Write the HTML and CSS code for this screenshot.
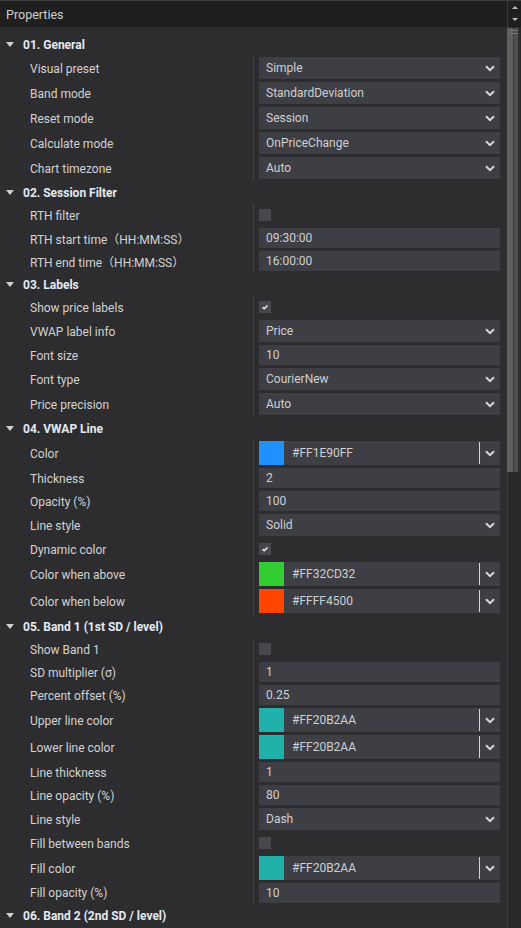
FILE: index.html
```html
<!DOCTYPE html>
<html>
<head>
<meta charset="utf-8">
<link rel="stylesheet" href="styles.css">
</head>
<body>
<div class="panel">
  <div class="titlebar">
    <span class="title">Properties</span>
    <div class="spin"><span class="up"></span><span class="down"></span></div>
  </div>
  <div class="body">
    <div class="list">

      <div class="sec-head"><span class="tri"></span>01. General</div>
      <div class="rows">
        <div class="row dd"><div class="label">Visual preset</div><div class="ctrl"><div class="select"><span>Simple</span><svg class="chev" width="10" height="7" viewBox="0 0 10 7"><path d="M1 1.2 L5 5.2 L9 1.2"/></svg></div></div></div>
        <div class="row dd"><div class="label">Band mode</div><div class="ctrl"><div class="select"><span>StandardDeviation</span><svg class="chev" width="10" height="7" viewBox="0 0 10 7"><path d="M1 1.2 L5 5.2 L9 1.2"/></svg></div></div></div>
        <div class="row dd"><div class="label">Reset mode</div><div class="ctrl"><div class="select"><span>Session</span><svg class="chev" width="10" height="7" viewBox="0 0 10 7"><path d="M1 1.2 L5 5.2 L9 1.2"/></svg></div></div></div>
        <div class="row dd"><div class="label">Calculate mode</div><div class="ctrl"><div class="select"><span>OnPriceChange</span><svg class="chev" width="10" height="7" viewBox="0 0 10 7"><path d="M1 1.2 L5 5.2 L9 1.2"/></svg></div></div></div>
        <div class="row dd"><div class="label">Chart timezone</div><div class="ctrl"><div class="select"><span>Auto</span><svg class="chev" width="10" height="7" viewBox="0 0 10 7"><path d="M1 1.2 L5 5.2 L9 1.2"/></svg></div></div></div>
      </div>

      <div class="sec-head"><span class="tri"></span>02. Session Filter</div>
      <div class="rows">
        <div class="row chk"><div class="label">RTH filter</div><div class="ctrl"><div class="checkbox"></div></div></div>
        <div class="row txt"><div class="label">RTH start time（HH:MM:SS）</div><div class="ctrl"><div class="input">09:30:00</div></div></div>
        <div class="row txt"><div class="label">RTH end time（HH:MM:SS）</div><div class="ctrl"><div class="input">16:00:00</div></div></div>
      </div>

      <div class="sec-head"><span class="tri"></span>03. Labels</div>
      <div class="rows">
        <div class="row chk"><div class="label">Show price labels</div><div class="ctrl"><div class="checkbox"><svg width="12" height="12" viewBox="0 0 12 12"><path d="M3.5 6.2 L5.2 7.8 L8.5 4.5"/></svg></div></div></div>
        <div class="row dd"><div class="label">VWAP label info</div><div class="ctrl"><div class="select"><span>Price</span><svg class="chev" width="10" height="7" viewBox="0 0 10 7"><path d="M1 1.2 L5 5.2 L9 1.2"/></svg></div></div></div>
        <div class="row txt"><div class="label">Font size</div><div class="ctrl"><div class="input">10</div></div></div>
        <div class="row dd"><div class="label">Font type</div><div class="ctrl"><div class="select"><span>CourierNew</span><svg class="chev" width="10" height="7" viewBox="0 0 10 7"><path d="M1 1.2 L5 5.2 L9 1.2"/></svg></div></div></div>
        <div class="row dd"><div class="label">Price precision</div><div class="ctrl"><div class="select"><span>Auto</span><svg class="chev" width="10" height="7" viewBox="0 0 10 7"><path d="M1 1.2 L5 5.2 L9 1.2"/></svg></div></div></div>
      </div>

      <div class="sec-head"><span class="tri"></span>04. VWAP Line</div>
      <div class="rows">
        <div class="row col"><div class="label">Color</div><div class="ctrl"><div class="color"><span class="swatch" style="background:#1E90FF"></span><span class="hex">#FF1E90FF</span><span class="sep"></span><svg class="chev" width="10" height="7" viewBox="0 0 10 7"><path d="M1 1.2 L5 5.2 L9 1.2"/></svg></div></div></div>
        <div class="row txt"><div class="label">Thickness</div><div class="ctrl"><div class="input">2</div></div></div>
        <div class="row txt"><div class="label">Opacity (%)</div><div class="ctrl"><div class="input">100</div></div></div>
        <div class="row dd"><div class="label">Line style</div><div class="ctrl"><div class="select"><span>Solid</span><svg class="chev" width="10" height="7" viewBox="0 0 10 7"><path d="M1 1.2 L5 5.2 L9 1.2"/></svg></div></div></div>
        <div class="row chk"><div class="label">Dynamic color</div><div class="ctrl"><div class="checkbox"><svg width="12" height="12" viewBox="0 0 12 12"><path d="M3.5 6.2 L5.2 7.8 L8.5 4.5"/></svg></div></div></div>
        <div class="row col"><div class="label">Color when above</div><div class="ctrl"><div class="color"><span class="swatch" style="background:#32CD32"></span><span class="hex">#FF32CD32</span><span class="sep"></span><svg class="chev" width="10" height="7" viewBox="0 0 10 7"><path d="M1 1.2 L5 5.2 L9 1.2"/></svg></div></div></div>
        <div class="row col"><div class="label">Color when below</div><div class="ctrl"><div class="color"><span class="swatch" style="background:#FF4500"></span><span class="hex">#FFFF4500</span><span class="sep"></span><svg class="chev" width="10" height="7" viewBox="0 0 10 7"><path d="M1 1.2 L5 5.2 L9 1.2"/></svg></div></div></div>
      </div>

      <div class="sec-head"><span class="tri"></span>05. Band 1 (1st SD / level)</div>
      <div class="rows">
        <div class="row chk"><div class="label">Show Band 1</div><div class="ctrl"><div class="checkbox"></div></div></div>
        <div class="row txt"><div class="label">SD multiplier (σ)</div><div class="ctrl"><div class="input">1</div></div></div>
        <div class="row txt"><div class="label">Percent offset (%)</div><div class="ctrl"><div class="input">0.25</div></div></div>
        <div class="row col"><div class="label">Upper line color</div><div class="ctrl"><div class="color"><span class="swatch" style="background:#20B2AA"></span><span class="hex">#FF20B2AA</span><span class="sep"></span><svg class="chev" width="10" height="7" viewBox="0 0 10 7"><path d="M1 1.2 L5 5.2 L9 1.2"/></svg></div></div></div>
        <div class="row col"><div class="label">Lower line color</div><div class="ctrl"><div class="color"><span class="swatch" style="background:#20B2AA"></span><span class="hex">#FF20B2AA</span><span class="sep"></span><svg class="chev" width="10" height="7" viewBox="0 0 10 7"><path d="M1 1.2 L5 5.2 L9 1.2"/></svg></div></div></div>
        <div class="row txt"><div class="label">Line thickness</div><div class="ctrl"><div class="input">1</div></div></div>
        <div class="row txt"><div class="label">Line opacity (%)</div><div class="ctrl"><div class="input">80</div></div></div>
        <div class="row dd"><div class="label">Line style</div><div class="ctrl"><div class="select"><span>Dash</span><svg class="chev" width="10" height="7" viewBox="0 0 10 7"><path d="M1 1.2 L5 5.2 L9 1.2"/></svg></div></div></div>
        <div class="row chk"><div class="label">Fill between bands</div><div class="ctrl"><div class="checkbox"></div></div></div>
        <div class="row col"><div class="label">Fill color</div><div class="ctrl"><div class="color"><span class="swatch" style="background:#20B2AA"></span><span class="hex">#FF20B2AA</span><span class="sep"></span><svg class="chev" width="10" height="7" viewBox="0 0 10 7"><path d="M1 1.2 L5 5.2 L9 1.2"/></svg></div></div></div>
        <div class="row txt last"><div class="label">Fill opacity (%)</div><div class="ctrl"><div class="input">10</div></div></div>
      </div>

      <div class="sec-head"><span class="tri"></span>06. Band 2 (2nd SD / level)</div>
    </div>
    <div class="scrollbar"><div class="thumb"><span class="grip"></span><span class="grip"></span></div></div>
  </div>
</div>
</body>
</html>
```

FILE: styles.css
```css
* { box-sizing: border-box; }
html, body {
  margin: 0;
  padding: 0;
  background: #2d2d30;
  height: 928px;
  overflow: hidden;
}
body {
  font-family: Roboto, "Noto Sans CJK SC", sans-serif;
  font-size: 12px;
  color: #d4d4d4;
}
.panel {
  width: 521px;
  height: 928px;
  display: flex;
  flex-direction: column;
}
.titlebar {
  height: 27px;
  flex: none;
  background: #1f1f1f;
  border-top: 1px solid #3e3e3e;
  display: flex;
  align-items: center;
  justify-content: space-between;
}
.title {
  padding-left: 6px;
  font-size: 12.5px;
  color: #cfcfcf;
}
.spin {
  width: 14px;
  height: 26px;
  border-left: 1px solid #3a3a3a;
  display: flex;
  flex-direction: column;
  align-items: center;
  justify-content: space-between;
  padding: 5px 0 6px;
}
.spin .up {
  width: 0; height: 0;
  border-left: 3px solid transparent;
  border-right: 3px solid transparent;
  border-bottom: 3px solid #bdbdbd;
}
.spin .down {
  width: 0; height: 0;
  border-left: 3px solid transparent;
  border-right: 3px solid transparent;
  border-top: 3px solid #bdbdbd;
}
.body {
  flex: 1;
  display: flex;
  min-height: 0;
}
.list {
  flex: 1;
  padding-top: 6px;
}
.sec-head {
  height: 23px;
  display: flex;
  align-items: center;
  font-weight: bold;
  color: #e4eaf2;
  padding-left: 6px;
}
.tri {
  width: 0; height: 0;
  border-left: 4.5px solid transparent;
  border-right: 4.5px solid transparent;
  border-top: 5px solid #cfcfcf;
  margin-right: 9px;
}
.rows {
  display: flex;
  flex-direction: column;
}
.row {
  display: flex;
  align-items: center;
  padding: 1px 0 2px;
}
.row.last {
  padding-bottom: 1px;
}
.label {
  width: 254px;
  align-self: stretch;
  display: flex;
  align-items: center;
  padding-left: 30px;
  border-right: 1px solid #434346;
  margin: -1px 0 -2px;
  color: #d2d2d2;
  white-space: nowrap;
}
.row.last .label {
  margin-bottom: -1px;
}
.ctrl {
  width: 246px;
  padding-left: 5px;
}
.select, .input, .color {
  background: #3e3e45;
  color: #d0d0d0;
  display: flex;
  align-items: center;
}
.select {
  height: 22px;
  padding: 0 5px 0 7px;
  justify-content: space-between;
}
.input {
  height: 20px;
  padding-left: 7px;
}
.chev path {
  fill: none;
  stroke: #d8d8d8;
  stroke-width: 2;
}
.color {
  height: 24px;
}
.swatch {
  width: 25px;
  align-self: stretch;
}
.hex {
  flex: 1;
  padding-left: 8px;
}
.sep {
  width: 1.5px;
  height: 22px;
  background: #d4d4d4;
}
.color .chev {
  margin: 0 5px 0 5px;
}
.row.chk .ctrl {
  height: 20px;
  display: flex;
  align-items: center;
}
.checkbox {
  width: 12px;
  height: 12px;
  background: #47474d;
}
.checkbox svg {
  display: block;
}
.checkbox path {
  fill: none;
  stroke: #f0f0f0;
  stroke-width: 1.5;
}
.scrollbar {
  width: 14px;
  flex: none;
  background: #29292b;
  border-left: 1px solid #3c3c3e;
  padding-top: 1px;
}
.thumb {
  height: 444px;
  width: 13px;
  margin-left: -1px;
  background: linear-gradient(to right, #5f5f60 0, #5f5f60 6px, #3a3a3c 6px, #3a3a3c 7px, #505052 7px, #505052 11px, #2f2f31 11px);
  padding-top: 2px;
  display: flex;
  flex-direction: column;
  align-items: center;
  gap: 2px;
}
.grip {
  width: 8px;
  height: 1px;
  background: #7a7a7a;
}
```
